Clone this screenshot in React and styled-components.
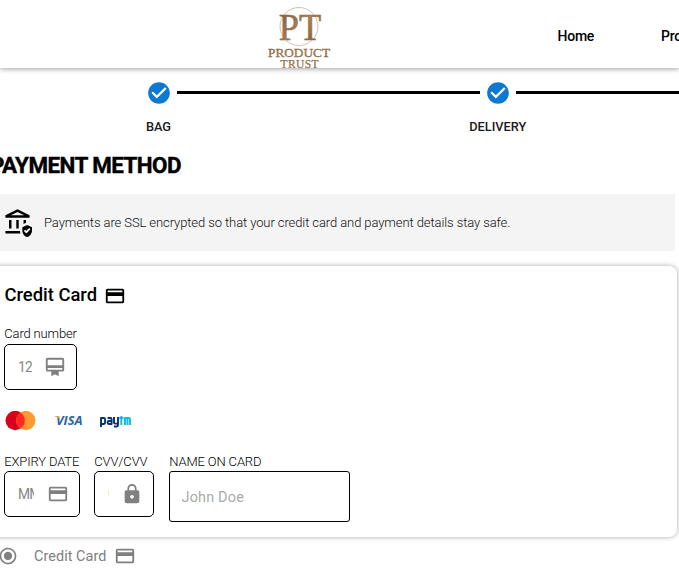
import React from "react";
import styled, { createGlobalStyle } from "styled-components";
import {
  MdCheckCircle,
  MdCreditCard,
  MdCardMembership,
  MdLock,
  MdRadioButtonChecked,
  MdOutlineAssuredWorkload,
} from "react-icons/md";

const GlobalStyle = createGlobalStyle`
  *, *::before, *::after { box-sizing: border-box; }
  html, body { margin: 0; overflow: hidden; background: #fff; }
  body { font-family: Roboto, sans-serif; color: #000; }
  svg { display: block; flex: none; }
`;

const Page = styled.div`
  width: 679px;
  height: 586px;
  overflow: hidden;
`;

const Header = styled.header`
  height: 68px;
  display: flex;
  padding-left: 264px;
  box-shadow: 0 1px 5px rgba(0, 0, 0, 0.38);
`;

const Logo = styled.svg`
  width: 70px;
  height: 68px;
`;

const Nav = styled.nav`
  display: flex;
  gap: 67px;
  padding-left: 223.5px;
  font-size: 14px;
  font-weight: 500;
  letter-spacing: -0.25px;
  line-height: 72px;
  white-space: nowrap;
`;

const NavLink = styled.span`
  width: 36.5px;
  flex: none;
`;

const Stepper = styled.div`
  display: flex;
  width: 900px;
  height: 77px;
  padding: 11.5px 0 0 145.5px;
`;

const Step = styled.div`
  width: 339.3px;
  flex: none;
`;

const StepTrack = styled.div`
  display: flex;
  align-items: center;
  color: #0e78d2;
`;

const Connector = styled.div`
  height: 3px;
  width: 303px;
  margin-left: 5.5px;
  background: #000;
`;

const StepLabel = styled.div`
  display: flex;
  justify-content: center;
  width: 26px;
  margin-top: 12.5px;
  font-size: 12.8px;
  font-weight: 500;
  line-height: 17px;
  white-space: nowrap;
  color: #1a1a1a;
`;

const Title = styled.h1`
  margin: 0 0 0 -10px;
  height: 49px;
  font-size: 22.4px;
  font-weight: 700;
  line-height: 41px;
  letter-spacing: -0.56px;
  -webkit-text-stroke: 0.4px #000;
`;

const Notice = styled.div`
  display: flex;
  align-items: center;
  width: 675px;
  height: 57px;
  padding-left: 3px;
  gap: 12px;
  background: #f4f4f4;
  font-size: 13px;
  font-weight: 300;
  letter-spacing: -0.09px;
  color: #111;
`;

const Card = styled.section`
  width: 687px;
  height: 271px;
  margin: 15px 0 0 -10px;
  padding: 14px 14px 0;
  border-radius: 8px;
  box-shadow: 0 0 5px rgba(0, 0, 0, 0.35);
`;

const CardTitle = styled.h2`
  display: flex;
  align-items: flex-end;
  gap: 7px;
  margin: 0;
  height: 27px;
  padding-left: 0.5px;
  font-size: 18.4px;
  font-weight: 500;
  line-height: 24px;
`;

const Field = styled.div`
  width: ${(p) => p.$width}px;
`;

const Label = styled.div`
  height: 16px;
  padding-left: 0.3px;
  font-size: 13px;
  font-weight: 300;
  letter-spacing: -0.15px;
  line-height: 16px;
  white-space: nowrap;
`;

const InputBox = styled.div`
  display: flex;
  align-items: center;
  justify-content: space-between;
  height: ${(p) => p.$height || 46}px;
  margin-top: ${(p) => p.$top || 1}px;
  padding: 0 10px 0 ${(p) => p.$left || 13}px;
  border: 1px solid #000;
  border-radius: ${(p) => p.$radius || 5}px;
  color: #808080;
`;

const Placeholder = styled.span`
  width: ${(p) => (p.$width ? p.$width + "px" : "auto")};
  overflow: hidden;
  white-space: nowrap;
  font-size: ${(p) => p.$size || 13.8}px;
  line-height: 18px;
  padding-top: ${(p) => p.$drop || 0}px;
  letter-spacing: ${(p) => p.$spacing || -0.8}px;
  color: ${(p) => p.$color || "#858585"};
`;

const NumberField = styled(Field)`
  margin-top: 19px;
`;

const Brands = styled.div`
  display: flex;
  align-items: center;
  height: 32px;
  margin-top: 15px;
`;

const BrandSvg = styled.svg`
  margin-right: ${(p) => p.$after || 0}px;
`;

const Row = styled.div`
  display: flex;
  align-items: flex-start;
  margin-top: 17px;
`;

const Spacer = styled.div`
  flex: none;
  width: ${(p) => p.$width}px;
`;

const Option = styled.div`
  display: flex;
  align-items: center;
  height: 38px;
  margin-left: -2px;
  color: #808080;
  font-size: 14.4px;
  letter-spacing: 0.07px;
`;

const OptionText = styled.span`
  margin: 0 8px 0 16px;
`;

function BrandLogo() {
  return (
    <Logo viewBox="0 0 70 68">
      <defs>
        <linearGradient id="bronze" x1="0" y1="0" x2="1" y2="1">
          <stop offset="0" stopColor="#755334" />
          <stop offset="0.5" stopColor="#a88154" />
          <stop offset="1" stopColor="#76532f" />
        </linearGradient>
      </defs>
      <circle cx="35" cy="26.5" r="19" fill="none" stroke="#cbbba6" strokeWidth="0.9" />
      <g fill="url(#bronze)" fontFamily="Liberation Serif, serif">
        <text x="14.8" y="40" fontSize="38.5" textLength="42.4" lengthAdjust="spacingAndGlyphs" stroke="#94704a" strokeWidth="0.6">PT</text>
        <text x="4" y="56.8" fontSize="12" textLength="62" lengthAdjust="spacingAndGlyphs" stroke="#8a6643" strokeWidth="0.3">PRODUCT</text>
        <text x="16.5" y="68.2" fontSize="11.5" textLength="38" lengthAdjust="spacing" stroke="#8a6643" strokeWidth="0.25">TRUST</text>
      </g>
    </Logo>
  );
}

function CardBrands() {
  return (
    <Brands>
      <BrandSvg width="32" height="20" viewBox="-0.5 0.5 32 20" $after={18}>
        <circle cx="10.7" cy="10" r="9.7" fill="#d9001b" />
        <circle cx="21.3" cy="10" r="9.7" fill="#ff9a32" />
        <path d="M16 1.9a9.7 9.7 0 0 1 0 16.2a9.7 9.7 0 0 1 0-16.2z" fill="#ff2a1e" />
      </BrandSvg>
      <BrandSvg width="30" height="14" viewBox="0 0.6 30 14" $after={15}>
        <text x="2" y="11.6" fontFamily="Open Sans, sans-serif" fontSize="12.2" fontWeight="700" fontStyle="italic" fill="#2966a8" textLength="26.5" lengthAdjust="spacingAndGlyphs">VISA</text>
        <path d="M0.8 2.7h4l1 3.5q-1.7-2.4-5-3.1z" fill="#dfa347" />
      </BrandSvg>
      <svg width="34" height="16" viewBox="0 0 34 16" fill="none" strokeWidth="1.9" strokeLinejoin="round">
        <g stroke="#06306f">
          <path d="M2 14V5h2.8q1.3 0 1.3 1.4v3.2q0 1.4-1.3 1.4H2" />
          <path d="M8.6 5h2.8q1.2 0 1.2 1.3V11H9.8q-1.2 0-1.2-1.5T9.8 8h2.8" />
          <path d="M15 4v5.4q0 1.2 1.2 1.2H19M19 4v8q0 1.5-1.4 1.5H15" />
        </g>
        <g stroke="#12b8ef">
          <path d="M20.3 5h4.2M22.3 3v9" />
          <path d="M26 12V5h3.8q1.2 0 1.2 1.3V12M28.5 5v7" />
        </g>
      </svg>
    </Brands>
  );
}

export default function App() {
  return (
    <Page>
      <GlobalStyle />
      <Header>
        <BrandLogo />
        <Nav>
          <NavLink>Home</NavLink>
          <NavLink>Products</NavLink>
        </Nav>
      </Header>
      <Stepper>
        {["BAG", "DELIVERY"].map((label) => (
          <Step key={label}>
            <StepTrack>
              <MdCheckCircle size={26} />
              <Connector />
            </StepTrack>
            <StepLabel>{label}</StepLabel>
          </Step>
        ))}
      </Stepper>
      <Title>PAYMENT METHOD</Title>
      <Notice>
        <MdOutlineAssuredWorkload size={29} color="#000" />
        Payments are SSL encrypted so that your credit card and payment details stay safe.
      </Notice>
      <Card>
        <CardTitle>
          Credit Card <MdCreditCard size={22} />
        </CardTitle>
        <NumberField $width={73}>
          <Label>Card number</Label>
          <InputBox $top={2}>
            <Placeholder $width={14}>1234 5678</Placeholder>
            <MdCardMembership size={22} />
          </InputBox>
        </NumberField>
        <CardBrands />
        <Row>
          <Field $width={76}>
            <Label>EXPIRY DATE</Label>
            <InputBox>
              <Placeholder $width={16}>MM/YY</Placeholder>
              <MdCreditCard size={22} />
            </InputBox>
          </Field>
          <Spacer $width={14} />
          <Field $width={60}>
            <Label>CVV/CVV</Label>
            <InputBox>
              <Placeholder $width={1} $color="#b5b5b5">000</Placeholder>
              <MdLock size={22} />
            </InputBox>
          </Field>
          <Spacer $width={15} />
          <Field $width={181}>
            <Label>NAME ON CARD</Label>
            <InputBox $height={51} $radius={3} $left={11.5}>
              <Placeholder $size={14.4} $color="#aaa" $spacing={0.2} $drop={2}>John Doe</Placeholder>
            </InputBox>
          </Field>
        </Row>
      </Card>
      <Option>
        <MdRadioButtonChecked size={20} />
        <OptionText>Credit Card</OptionText>
        <MdCreditCard size={22} />
      </Option>
    </Page>
  );
}
